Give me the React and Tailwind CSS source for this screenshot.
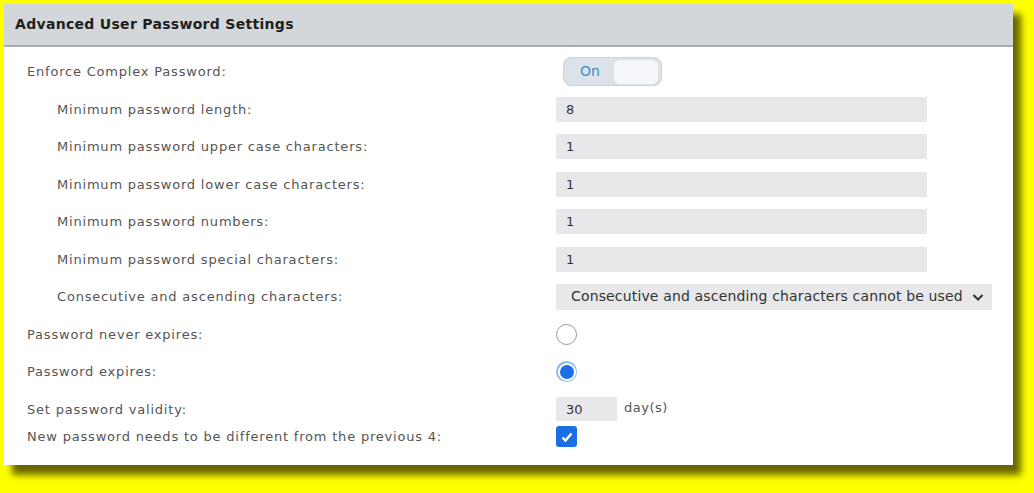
import React, { useState } from 'react';

const font = { fontFamily: '"DejaVu Sans", Verdana, sans-serif' };

const numberFields = [
  { label: 'Minimum password length:', value: '8' },
  { label: 'Minimum password upper case characters:', value: '1' },
  { label: 'Minimum password lower case characters:', value: '1' },
  { label: 'Minimum password numbers:', value: '1' },
  { label: 'Minimum password special characters:', value: '1' },
];

const Row = ({ label, indent, children, last }) => (
  <div className={`flex items-center ${last ? 'h-[17px]' : 'h-[37.5px]'}`}>
    <div className={`w-[529px] shrink-0 text-[13px] tracking-[0.8px] text-[#555] ${indent ? 'pl-[30px]' : ''}`}>{label}</div>
    <div className="flex items-center">{children}</div>
  </div>
);

const Radio = ({ checked, onClick }) => (
  checked ? (
    <button onClick={onClick} className="w-[21px] h-[21px] rounded-full bg-[#8fb9f3] flex items-center justify-center">
      <span className="w-[18px] h-[18px] rounded-full bg-white flex items-center justify-center">
        <span className="w-[14px] h-[14px] rounded-full bg-[#1a6fe6]" />
      </span>
    </button>
  ) : (
    <button onClick={onClick} className="w-[21px] h-[21px] rounded-full bg-white border-[1.5px] border-[#999]" />
  )
);

export default function App() {
  const [enforced, setEnforced] = useState(true);
  const [expires, setExpires] = useState(true);
  const [differ, setDiffer] = useState(true);

  return (
    <div className="w-[1034px] h-[493px] bg-[#ffff00] pt-[4px] pl-[4px]" style={font}>
      <div className="w-[1009px] h-[461px] bg-white shadow-[8px_10px_7px_rgba(0,0,0,0.6)]">
        <div className="h-[43px] bg-[#d4d7da] border-b-2 border-[#a9abad] px-[11px] flex items-center">
          <span className="text-[14px] font-bold tracking-[0.3px] text-[#1e1e1e]">Advanced User Password Settings</span>
        </div>

        <div className="pl-[23px] pt-[6px]">
          <Row label="Enforce Complex Password:">
            <button
              onClick={() => setEnforced(!enforced)}
              className="ml-[7px] w-[99px] h-[29px] rounded-[8px] bg-[#dce2e9] border border-[#cdd3da] flex items-center justify-between pl-[16px] pr-[3px]"
            >
              <span className="text-[14px] text-[#3b8fc9]">{enforced ? 'On' : 'Off'}</span>
              <span className="w-[44px] h-[24px] rounded-[6px] bg-[#f4f6fa]" />
            </button>
          </Row>

          {numberFields.map((f) => (
            <Row key={f.label} label={f.label} indent>
              <div className="w-[371px] h-[25px] bg-[#e8e8ea] pl-[10px] flex items-center text-[13px] text-[#333]">{f.value}</div>
            </Row>
          ))}

          <Row label="Consecutive and ascending characters:" indent>
            <div className="w-[436px] h-[26px] bg-[#e8e8ea] flex items-center pl-[15px] pr-[8px] text-[14px] tracking-[0.15px] text-[#333]">
              <span className="flex-1 whitespace-nowrap">Consecutive and ascending characters cannot be used</span>
              <svg width="12" height="10" viewBox="0 0 12 10" className="ml-[4px]">
                <polyline points="1.5,3 6,7.5 10.5,3" fill="none" stroke="#333" strokeWidth="2" />
              </svg>
            </div>
          </Row>

          <Row label="Password never expires:">
            <Radio checked={!expires} onClick={() => setExpires(false)} />
          </Row>

          <Row label="Password expires:">
            <Radio checked={expires} onClick={() => setExpires(true)} />
          </Row>

          <Row label="Set password validity:">
            <div className="w-[61px] h-[24px] bg-[#e8e8ea] pl-[10px] flex items-center text-[13px] text-[#333]">30</div>
            <span className="ml-[7px] text-[13px] tracking-[0.5px] text-[#555] -mt-[4px]">day(s)</span>
          </Row>

          <Row label="New password needs to be different from the previous 4:" last>
            <button
              onClick={() => setDiffer(!differ)}
              className={`w-[21px] h-[21px] shrink-0 rounded-[3px] flex items-center justify-center ${differ ? 'bg-[#1a6fe6]' : 'bg-white border border-[#8a8a8a]'}`}
            >
              {differ && (
                <svg width="14" height="14" viewBox="0 0 14 14">
                  <polyline points="2.5,7.5 5.5,10.5 11.5,3.5" fill="none" stroke="white" strokeWidth="2.4" />
                </svg>
              )}
            </button>
          </Row>
        </div>
      </div>
    </div>
  );
}
